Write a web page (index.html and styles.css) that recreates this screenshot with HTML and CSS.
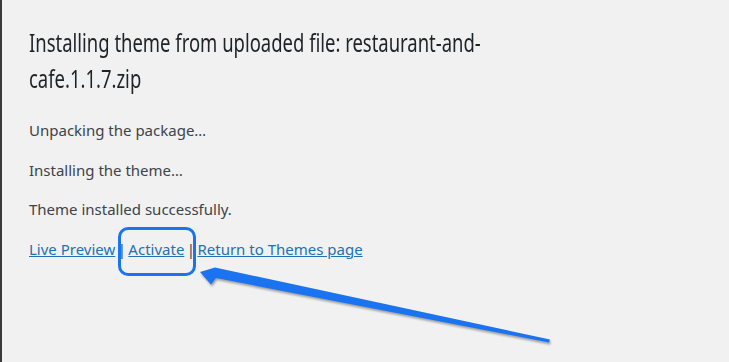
FILE: index.html
```html
<!DOCTYPE html>
<html lang="en">

<head>
  <meta charset="UTF-8" />
  <meta name="viewport" content="width=device-width, initial-scale=1.0" />
  <title>Install Themes</title>
  <link rel="stylesheet" href="styles.css">
</head>

<body>
  <div class="wrap">
    <h1>Installing theme from uploaded file: restaurant-and-cafe.1.1.7.zip</h1>

    <p>Unpacking the package&hellip;</p>
    <p>Installing the theme&hellip;</p>
    <p>Theme installed successfully.</p>

    <p class="actions">
      <a href="#">Live Preview</a> |
      <span class="highlight"><a href="#">Activate</a></span> |
      <a href="#">Return to Themes page</a>
    </p>
  </div>

  <!-- annotation arrow pointing at the Activate link -->
  <svg class="arrow" width="729" height="362" viewBox="0 0 729 362">
    <polygon points="198,272 213,267.5 548,339.5 547,342.5 214,278 209,284.5" fill="#1a73f0" />
  </svg>
</body>

</html>
```

FILE: styles.css
```css
body {
  margin: 0;
  min-height: 100vh;
  background: #f1f1f1;
  border-left: 2px solid #3a3a3a;
  box-sizing: border-box;
  position: relative;
  font-family: "Noto Sans", "Open Sans", sans-serif;
  color: #3c434a;
}

.wrap {
  padding: 24px 20px 0 27px;
}

/* the title is drawn in a condensed face in the shot */
h1 {
  font-size: 26px;
  font-weight: 400;
  line-height: 36px;
  color: #1d2327;
  margin: 0 0 24px;
  width: 660px;
  transform: scaleX(0.71);
  transform-origin: left top;
}

p {
  font-size: 15px;
  line-height: 20px;
  margin: 0 0 19.5px;
}

.actions {
  word-spacing: -1.5px;
}

a {
  color: #2271b1;
  text-decoration: underline;
  word-spacing: normal;
}

.highlight {
  position: relative;
}

.highlight::after {
  content: "";
  position: absolute;
  left: -10px;
  right: -12px;
  top: -12px;
  bottom: -17px;
  border: 3px solid #1a73f0;
  border-radius: 10px;
}

.arrow {
  position: absolute;
  left: 0;
  top: 0;
  filter: drop-shadow(1px 2px 1px rgba(0, 0, 0, 0.35));
}
```
